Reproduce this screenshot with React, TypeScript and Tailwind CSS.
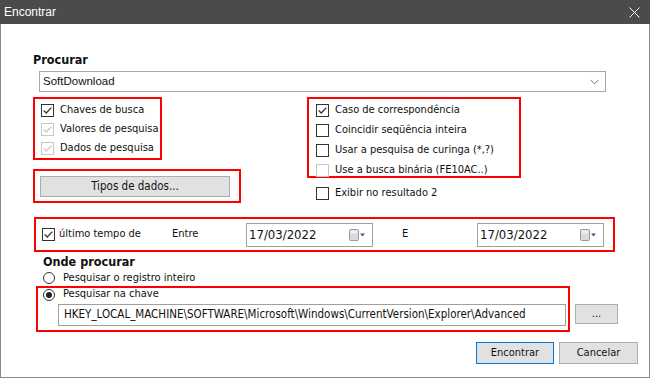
const body = "font-['DejaVu_Sans_Condensed','DejaVu_Sans',sans-serif] text-[11px] text-[#111]";

function Check({ checked, disabled }: { checked?: boolean; disabled?: boolean }) {
  const c = disabled ? "#c8c8c8" : "#333";
  return (
    <svg width="13" height="13" viewBox="0 0 13 13" className="shrink-0">
      <rect x="0.5" y="0.5" width="12" height="12" fill="#fff" stroke={c} />
      {checked && <polyline points="2.6,6.4 5.2,9 10.4,3.6" fill="none" stroke={c} strokeWidth="1.3" />}
    </svg>
  );
}

function Radio({ checked }: { checked?: boolean }) {
  return (
    <svg width="12" height="12" viewBox="0 0 12 12" className="shrink-0">
      <circle cx="6" cy="6" r="5.5" fill="#fff" stroke="#333" />
      {checked && <circle cx="6" cy="6" r="3" fill="#222" />}
    </svg>
  );
}

function CheckRow({ label, checked, disabled, h = "h-[19px]" }: { label: string; checked?: boolean; disabled?: boolean; h?: string }) {
  return (
    <div className={`flex items-center gap-[6px] ${h}`}>
      <Check checked={checked} disabled={disabled} />
      <span className="whitespace-nowrap">{label}</span>
    </div>
  );
}

function DateBox({ value }: { value: string }) {
  return (
    <div className="w-[127px] h-[24px] border border-[#a0a0a0] bg-white flex items-center justify-between pl-[2px] pr-[7px]">
      <span className="text-[13px] text-[#111]">{value}</span>
      <svg width="16" height="12" viewBox="0 0 16 12">
        <rect x="0.5" y="0.5" width="9" height="11" rx="1" fill="#dadada" stroke="#999" />
        <rect x="1.5" y="1.5" width="7" height="3" fill="#f0f0f0" />
        <polygon points="11,4.5 16,4.5 13.5,7.5" fill="#3a5c9a" />
      </svg>
    </div>
  );
}

export default function App() {
  return (
    <div className={`w-[650px] h-[378px] flex flex-col bg-white ${body}`}>
      {/* title bar */}
      <div className="h-[24px] bg-[#4b4b4b] flex items-center justify-between pl-[4px] pr-[10px] shrink-0">
        <span className="font-['Liberation_Sans',sans-serif] text-[12px] text-white">Encontrar</span>
        <svg width="11" height="11" viewBox="0 0 11 11">
          <path d="M0.5 0.5 L10.5 10.5 M10.5 0.5 L0.5 10.5" stroke="#fff" strokeWidth="1" />
        </svg>
      </div>

      <div className="flex-1 border-x border-b border-[#8a8a8a] pl-[32px] pr-[11px] pt-[28px] flex flex-col">
        <div className="text-[12.5px] font-bold leading-[16px]">Procurar</div>
        <div className="ml-[6px] mt-[3px] w-[567px] h-[21px] border border-[#a8a8a8] flex items-center justify-between pl-[3px] pr-[6px]">
          <span className="font-['Liberation_Sans',sans-serif] text-[11.5px]">SoftDownload</span>
          <svg width="9" height="6" viewBox="0 0 9 6">
            <polyline points="0.5,0.8 4.5,4.8 8.5,0.8" fill="none" stroke="#777" strokeWidth="1" />
          </svg>
        </div>

        <div className="flex mt-[5px]">
          {/* left column */}
          <div className="w-[274px] flex flex-col">
            <div className="w-[129px] h-[63px] border-2 border-[#f00] pl-[6px] pt-[2px]">
              <CheckRow label="Chaves de busca" checked />
              <CheckRow label="Valores de pesquisa" checked disabled />
              <CheckRow label="Dados de pesquisa" checked disabled />
            </div>
            <div className="mt-[9px] w-[208px] h-[34px] border-2 border-[#f00] pl-[5px] pt-[5px]">
              <div className="w-[190px] h-[21px] bg-[#e1e1e1] border border-[#adadad] flex items-center justify-center text-[11.5px]">
                Tipos de dados...
              </div>
            </div>
          </div>

          {/* right column */}
          <div className="flex flex-col">
            <div className="w-[214px] h-[81px] border-2 border-[#f00] pl-[7px] pt-[1px]">
              <CheckRow label="Caso de correspondência" checked h="h-[20px]" />
              <CheckRow label="Coincidir seqüência inteira" h="h-[20px]" />
              <CheckRow label="Usar a pesquisa de curinga (*,?)" h="h-[20px]" />
              <CheckRow label="Use a busca binária (FE10AC..)" disabled h="h-[20px]" />
            </div>
            <div className="mt-[5px] pl-[9px]">
              <CheckRow label="Exibir no resultado 2" h="h-[20px]" />
            </div>
          </div>
        </div>

        {/* time row */}
        <div className="ml-[1px] mt-[14px] w-[581px] h-[35px] border-2 border-[#f00] pl-[6px] flex items-center">
          <Check checked />
          <span className="ml-[4px] w-[113px]">último tempo de</span>
          <span className="w-[74px]">Entre</span>
          <DateBox value="17/03/2022" />
          <span className="ml-[29px] w-[75px]">E</span>
          <DateBox value="17/03/2022" />
        </div>

        <div className="ml-[10px] mt-[2px] text-[12.5px] font-bold leading-[16px]">Onde procurar</div>
        <div className="ml-[10px] h-[16px] flex items-center gap-[8px]">
          <Radio />
          <span>Pesquisar o registro inteiro</span>
        </div>

        <div className="flex items-start">
          <div className="ml-[3px] w-[534px] h-[46px] border-2 border-[#f00] pl-[5px] pt-[1px]">
            <div className="h-[11px] flex items-center gap-[8px]">
              <Radio checked />
              <span>Pesquisar na chave</span>
            </div>
            <div className="ml-[15px] mt-[4px] w-[508px] h-[22px] border border-[#a0a0a0] flex items-center pl-[5px] text-[11.5px]">
              HKEY_LOCAL_MACHINE\SOFTWARE\Microsoft\Windows\CurrentVersion\Explorer\Advanced
            </div>
          </div>
          <div className="ml-[5px] mt-[18px] w-[43px] h-[20px] bg-[#e1e1e1] border border-[#adadad] flex items-center justify-center">
            ...
          </div>
        </div>

        <div className="mt-[10px] flex justify-end gap-[5px]">
          <div className="w-[78px] h-[22px] bg-[#e1e1e1] border border-[#0078d7] flex items-center justify-center">Encontrar</div>
          <div className="w-[79px] h-[22px] bg-[#e1e1e1] border border-[#adadad] flex items-center justify-center">Cancelar</div>
        </div>
      </div>
    </div>
  );
}
